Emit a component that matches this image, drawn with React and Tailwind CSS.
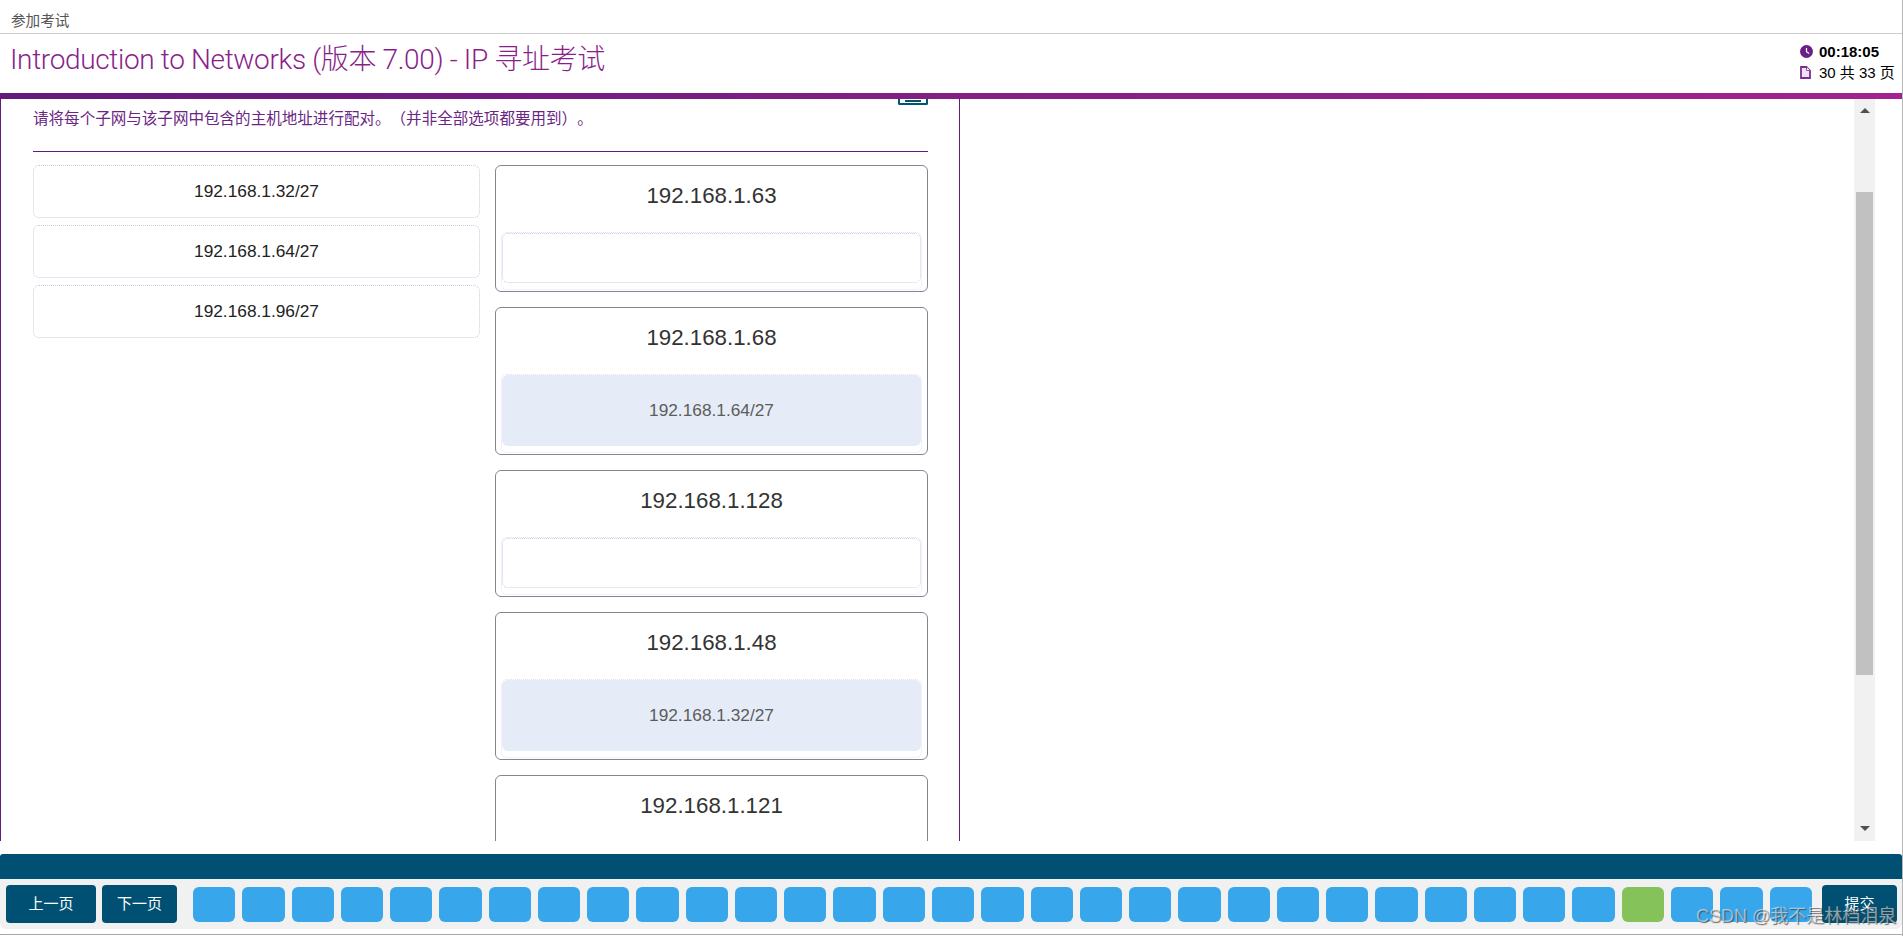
const font = { fontFamily: '"Liberation Sans", "Noto Sans CJK SC", sans-serif' };

const subnets = ["192.168.1.32/27", "192.168.1.64/27", "192.168.1.96/27"];

const targets = [
    { host: "192.168.1.63", answer: null },
    { host: "192.168.1.68", answer: "192.168.1.64/27" },
    { host: "192.168.1.128", answer: null },
    { host: "192.168.1.48", answer: "192.168.1.32/27" },
    { host: "192.168.1.121", answer: null },
];

const pages = Array.from({ length: 33 }, (_, i) => i + 1);

const ClockIcon = () => (
    <svg width="13" height="13" viewBox="0 0 13 13">
        <circle cx="6.5" cy="6.5" r="6.5" fill="#6a1f85" />
        <path d="M6.5 3v3.7l2.6 1.8" stroke="#fff" strokeWidth="1.2" fill="none" />
    </svg>
);

const PageIcon = () => (
    <svg width="11" height="13" viewBox="0 0 11 13">
        <path d="M1 1h5.5L10 4.5V12H1z" fill="#efe3f3" stroke="#7b2f92" strokeWidth="1.8" />
        <path d="M6.5 1v3.5H10" fill="#fff" stroke="#7b2f92" strokeWidth="0.8" />
    </svg>
);

const Target = ({ host, answer }) => (
    <div className="rounded-md border border-[#7f8790] bg-white shrink-0">
        <div className="h-[66px] pt-[14px] text-center text-[22.3px] leading-[32px] text-[#333]">{host}</div>
        <div className="mx-[5px] mb-[1px] rounded-md border border-dotted border-[#f1d9f6] pb-[6px]">
            {answer ? (
                <div className="flex h-[71px] items-center justify-center rounded-md bg-[#e5ecf7] pt-[1px] text-[17.3px] text-[#5c5c5c]">
                    {answer}
                </div>
            ) : (
                <div className="h-[50px] rounded-md border border-dotted border-[#c9cfe8]" />
            )}
        </div>
    </div>
);

const App = () => {
    return (
        <div style={font} className="relative flex h-[936px] w-full flex-col overflow-hidden bg-white border-r border-[#b5b5b5]">
            <div className="h-[33px] pl-[11px] pt-[12px] text-[14.6px] leading-[18px] text-[#555]">参加考试</div>

            <div className="flex h-[60px] justify-between border-t border-[#cccccc]">
                <h1
                    style={{ fontFamily: 'Roboto, "Noto Sans CJK SC", sans-serif' }}
                    className="pl-[10px] pt-[7px] text-[28px] font-light leading-[38px] tracking-[-0.35px] text-[#8a1f8c]"
                >
                    Introduction to Networks (版本 7.00) - IP 寻址考试
                </h1>
                <div className="w-[95px] mr-[7px] pt-[7px] text-[15px] leading-[21px] text-black">
                    <div className="flex items-center gap-[6px] font-bold">
                        <ClockIcon />
                        <span>00:18:05</span>
                    </div>
                    <div className="flex items-center gap-[8px] whitespace-nowrap">
                        <PageIcon />
                        <span>30 共 33 页</span>
                    </div>
                </div>
            </div>

            <div className="h-[6px] bg-gradient-to-r from-[#641a7a] to-[#a32190]" />

            <div className="flex h-[742px] overflow-hidden">
                <div className="w-[960px] shrink-0 overflow-hidden border-x border-[#641a7a] pl-[32px] pr-[31px]">
                    <div className="ml-auto flex h-[6px] w-[30px] items-start justify-center rounded-b-[2px] border-x-2 border-b-2 border-[#00556f] pt-[1px]">
                        <div className="h-[2px] w-[16px] bg-[#00556f]" />
                    </div>
                    <p className="mt-[4px] text-[15.55px] leading-[20px] text-[#6b2583] [text-spacing-trim:space-all]">
                        请将每个子网与该子网中包含的主机地址进行配对。（并非全部选项都要用到）。
                    </p>
                    <div className="mt-[22px] border-t border-[#641a7a]" />
                    <div className="mt-[13px] flex gap-[15px]">
                        <div className="flex w-[447px] shrink-0 flex-col gap-[7px]">
                            {subnets.map((item) => (
                                <div
                                    key={item}
                                    className="flex h-[53px] items-center justify-center rounded-md border border-dotted border-[#c3cedd] text-[17.3px] text-[#222]"
                                >
                                    {item}
                                </div>
                            ))}
                        </div>
                        <div className="flex w-[433px] shrink-0 flex-col gap-[15px]">
                            {targets.map((item) => (
                                <Target key={item.host} host={item.host} answer={item.answer} />
                            ))}
                        </div>
                    </div>
                </div>

                <div className="flex flex-1 justify-end pr-[27px]">
                    <div className="flex w-[21px] flex-col items-center bg-[#f1f1f1]">
                        <div className="mt-[9px] h-0 w-0 border-x-[5px] border-b-[5px] border-x-transparent border-b-[#505050]" />
                        <div className="mt-[79px] h-[483px] w-[17px] bg-[#c1c1c1]" />
                        <div className="mt-[151px] h-0 w-0 border-x-[5px] border-t-[5px] border-x-transparent border-t-[#505050]" />
                    </div>
                </div>
            </div>

            <div className="mt-[13px] h-[25px] rounded-t-[3px] bg-[#005073]" />
            <div className="flex h-[50px] items-center rounded-b-md bg-[#f1f1f1] pl-[6px] pr-[5px]">
                <button className="h-[38px] w-[90px] rounded bg-[#005073] text-[15px] text-white">上一页</button>
                <button className="ml-[6px] h-[38px] w-[75px] rounded bg-[#005073] text-[15px] text-white">下一页</button>
                <div className="ml-[16px] flex flex-1 gap-[7px]">
                    {pages.map((page) => (
                        <div
                            key={page}
                            className={page === 30 ? "h-[35px] flex-1 rounded-md bg-[#85c25a]" : "h-[35px] flex-1 rounded-md bg-[#38a6eb]"}
                        />
                    ))}
                </div>
                <button className="ml-[10px] h-[38px] w-[75px] rounded bg-[#005073] text-[15px] text-white">提交</button>
            </div>
            <div className="h-[6px] border-b border-[#a8a8a8]" />

            <div
                style={{ textShadow: "1px 1px 1px rgba(60,60,60,0.75)" }}
                className="absolute left-[1696px] top-[905px] whitespace-nowrap text-[18px] leading-[22px] text-[#ffffff]/50"
            >
                CSDN @我不是林档泪泉
            </div>
        </div>
    );
};

export default App;
